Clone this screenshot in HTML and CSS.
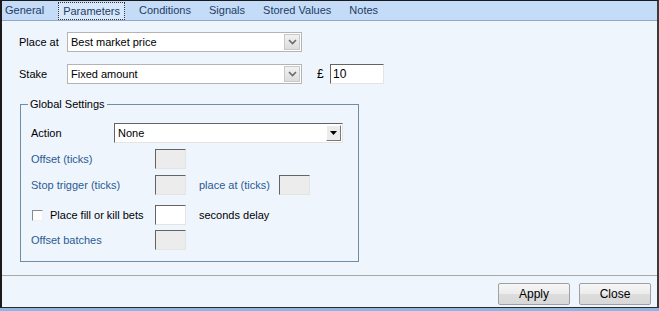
FILE: index.html
```html
<!DOCTYPE html>
<html lang="en">
<head>
    <meta charset="UTF-8">
    <meta name="viewport" content="width=device-width, initial-scale=1.0">
    <title>Parameters</title>
    <link rel="stylesheet" href="styles.css">
</head>
<body>
    <div class="window">
        <div class="tabs">
            <div class="tab">General</div>
            <div class="tab selected"><span class="focus">Parameters</span></div>
            <div class="tab">Conditions</div>
            <div class="tab">Signals</div>
            <div class="tab">Stored Values</div>
            <div class="tab">Notes</div>
        </div>

        <div class="content">
            <div class="row">
                <label class="label">Place at</label>
                <div class="combo">
                    <span class="combo-text">Best market price</span>
                    <span class="combo-btn">
                        <svg width="9" height="6" viewBox="0 0 9 6"><path d="M1 1 L4.5 4.5 L8 1" fill="none" stroke="#6a6a6a" stroke-width="1.6"/></svg>
                    </span>
                </div>
            </div>
            <div class="row row-stake">
                <label class="label">Stake</label>
                <div class="combo">
                    <span class="combo-text">Fixed amount</span>
                    <span class="combo-btn">
                        <svg width="9" height="6" viewBox="0 0 9 6"><path d="M1 1 L4.5 4.5 L8 1" fill="none" stroke="#6a6a6a" stroke-width="1.6"/></svg>
                    </span>
                </div>
                <span class="currency">£</span>
                <div class="textbox amount">10</div>
            </div>

            <fieldset class="group">
                <legend>Global Settings</legend>
                <div class="grow action-row">
                    <span class="glabel">Action</span>
                    <div class="dropdown">
                        <span class="combo-text">None</span>
                        <span class="drop-btn">
                            <svg width="7" height="4" viewBox="0 0 7 4"><path d="M0 0 H7 L3.5 4 Z" fill="#000"/></svg>
                        </span>
                    </div>
                </div>
                <div class="grow">
                    <span class="glabel blue">Offset (ticks)</span>
                    <div class="textbox small disabled"></div>
                </div>
                <div class="grow">
                    <span class="glabel blue">Stop trigger (ticks)</span>
                    <div class="textbox small disabled"></div>
                    <span class="side blue ticks">place at (ticks)</span>
                    <div class="textbox small disabled"></div>
                </div>
                <div class="grow fill-row">
                    <span class="glabel">
                        <span class="check"></span>Place fill or kill bets
                    </span>
                    <div class="textbox small"></div>
                    <span class="side">seconds delay</span>
                </div>
                <div class="grow">
                    <span class="glabel blue">Offset batches</span>
                    <div class="textbox small disabled"></div>
                </div>
            </fieldset>
        </div>

        <div class="footer">
            <button class="btn">Apply</button>
            <button class="btn">Close</button>
        </div>
    </div>
</body>
</html>
```

FILE: styles.css
```css
body {
    margin: 0;
    background-color: #8fb4e2;
    font-family: 'Liberation Sans', Arial, sans-serif;
    font-size: 11px;
    color: #000;
}
.window {
    width: 659px;
    height: 308px;
    box-sizing: border-box;
    border-top: 1px solid #1a1a1a;
    border-left: 2px solid #1a1a1a;
    border-right: 2px solid #3a3a3a;
    border-bottom: 1px solid #2a2a2a;
    background-color: #eef5fd;
    display: flex;
    flex-direction: column;
}
.tabs {
    height: 19px;
    background-color: #c4dcf8;
    border-bottom: 1px solid #8ea8c8;
    display: flex;
    align-items: center;
    padding-left: 3px;
}
.tab {
    color: #1e3c64;
    margin-right: 18px;
    line-height: 17px;
}
.tab.selected {
    margin-left: -4px;
    margin-right: 14px;
}
.focus {
    display: inline-block;
    border: 1px dotted #333;
    padding: 0 4px;
    line-height: 16px;
    background-color: #d8e8fb;
}
.content {
    flex: 1;
    padding: 11px 0 0 17px;
}
.row {
    display: flex;
    align-items: center;
    height: 20px;
}
.row-stake {
    margin-top: 12px;
}
.label {
    width: 48px;
}
.combo {
    width: 235px;
    height: 20px;
    box-sizing: border-box;
    border: 1px solid #b4b4b4;
    background-color: #fff;
    display: flex;
    align-items: center;
    justify-content: space-between;
}
.combo-text {
    padding-left: 3px;
}
.combo-btn {
    width: 16px;
    height: 16px;
    margin-right: 1px;
    box-sizing: border-box;
    border: 1px solid #c8c8c8;
    background: linear-gradient(#f2f2f2, #dcdcdc);
    display: flex;
    align-items: center;
    justify-content: center;
}
.currency {
    margin-left: 15px;
    width: 13px;
    font-size: 12px;
}
.textbox {
    height: 20px;
    box-sizing: border-box;
    background-color: #fff;
    border-top: 1px solid #646464;
    border-left: 1px solid #646464;
    border-right: 1px solid #e4e4e4;
    border-bottom: 1px solid #e4e4e4;
    line-height: 18px;
    padding-left: 2px;
    font-size: 12px;
}
.amount {
    width: 54px;
}
.group {
    margin: 14px 0 0 1px;
    width: 339px;
    height: 164px;
    box-sizing: border-box;
    border: 1px solid #6f8ea6;
    padding: 13px 14px 0 10px;
}
.group legend {
    padding: 0 2px;
    margin-left: -3px;
}
.grow {
    display: flex;
    align-items: center;
    height: 20px;
    margin-top: 6px;
}
.action-row {
    margin-top: 0;
}
.fill-row {
    margin-top: 10px;
}
.fill-row + .grow {
    margin-top: 5px;
}
.glabel {
    width: 124px;
    display: flex;
    align-items: center;
}
.action-row .glabel {
    width: 83px;
}
.blue {
    color: #2b5b93;
}
.dropdown {
    width: 229px;
    height: 20px;
    box-sizing: border-box;
    border-top: 1px solid #646464;
    border-left: 1px solid #646464;
    border-right: 1px solid #e4e4e4;
    border-bottom: 1px solid #e4e4e4;
    background-color: #fff;
    display: flex;
    align-items: center;
    justify-content: space-between;
}
.drop-btn {
    width: 15px;
    height: 16px;
    margin-right: 1px;
    box-sizing: border-box;
    background-color: #ececec;
    border-top: 1px solid #fff;
    border-left: 1px solid #fff;
    border-right: 1px solid #7a7a7a;
    border-bottom: 1px solid #7a7a7a;
    display: flex;
    align-items: center;
    justify-content: center;
}
.small {
    width: 31px;
}
.disabled {
    background-color: #ececec;
}
.side {
    margin-left: 13px;
    margin-right: 4px;
}
.ticks {
    margin-right: 9px;
}
.check {
    width: 11px;
    height: 11px;
    box-sizing: border-box;
    border-top: 1px solid #8a8a8a;
    border-left: 1px solid #8a8a8a;
    border-right: 1px solid #f0f0f0;
    border-bottom: 1px solid #f0f0f0;
    background-color: #fff;
    margin: 0 7px 0 1px;
}
.footer {
    height: 32px;
    border-top: 1px solid #a7a7a7;
    display: flex;
    align-items: flex-start;
    justify-content: flex-end;
    gap: 9px;
    padding: 7px 6px 0 0;
    box-sizing: border-box;
}
.btn {
    width: 72px;
    height: 22px;
    border: 1px solid #a0a0a0;
    border-radius: 2px;
    background: linear-gradient(#f6f6f6 0%, #ececec 50%, #dddddd 51%, #d8d8d8 100%);
    font-family: 'Liberation Sans', Arial, sans-serif;
    font-size: 12px;
    color: #000;
    padding: 0;
}
```
